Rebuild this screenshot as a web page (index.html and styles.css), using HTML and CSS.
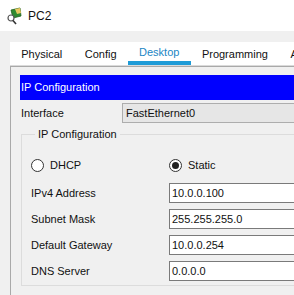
FILE: index.html
```html
<!DOCTYPE html>
<html lang="en">
<head>
  <meta charset="UTF-8" />
  <title>PC2</title>
  <link rel="stylesheet" href="styles.css">
</head>
<body>
  <div class="titlebar">
    <svg class="app-icon" width="16" height="18" viewBox="0 0 16 18">
      <polygon points="5,3 14,1 15,9 7,11" fill="#2f8a2f" stroke="#1d5e1d" stroke-width="0.8"/>
      <polygon points="9,2 14,1 15,6 11,7" fill="#e8c860"/>
      <circle cx="5" cy="11" r="3" fill="#fff" stroke="#555" stroke-width="1.2"/>
      <line x1="7" y1="13.5" x2="10" y2="17" stroke="#333" stroke-width="1.6"/>
    </svg>
    <span class="title">PC2</span>
  </div>

  <div class="tabs">
    <span class="tab">Physical</span>
    <span class="tab">Config</span>
    <span class="tab active">Desktop</span>
    <span class="tab">Programming</span>
    <span class="tab">Attributes</span>
  </div>

  <div class="panel">
    <div class="header">IP Configuration</div>

    <div class="row iface">
      <span class="label">Interface</span>
      <div class="combo">FastEthernet0</div>
    </div>

    <fieldset class="group">
      <legend>IP Configuration</legend>

      <div class="radios">
        <label class="radio"><span class="dot"></span>DHCP</label>
        <label class="radio checked"><span class="dot"></span>Static</label>
      </div>

      <div class="field">
        <span class="label">IPv4 Address</span>
        <div class="input">10.0.0.100</div>
      </div>
      <div class="field">
        <span class="label">Subnet Mask</span>
        <div class="input">255.255.255.0</div>
      </div>
      <div class="field">
        <span class="label">Default Gateway</span>
        <div class="input">10.0.0.254</div>
      </div>
      <div class="field">
        <span class="label">DNS Server</span>
        <div class="input">0.0.0.0</div>
      </div>
    </fieldset>
  </div>
</body>
</html>
```

FILE: styles.css
```css
html, body {
  overflow: hidden;
}
body {
  margin: 0;
  background: #f0f0f0;
  font-family: "Liberation Sans", Arial, sans-serif;
  font-size: 11px;
  color: #111;
  height: 295px;
}
.titlebar {
  height: 31px;
  background: #fff;
  display: flex;
  align-items: center;
  padding-left: 6px;
}
.app-icon {
  margin-right: 6px;
}
.title {
  font-size: 12px;
}
.tabs {
  margin: 11px 0 0 10px;
  height: 23px;
  background: #fff;
  display: flex;
  white-space: nowrap;
  overflow: hidden;
  border-bottom: 1px solid #dadada;
}
.tab {
  padding: 1px 11.25px 0;
  line-height: 22px;
  flex: none;
}
.tab.active {
  color: #1b86c4;
  border-bottom: 4px solid #1e9bd7;
  line-height: 19px;
  height: 18px;
}
.panel {
  margin-left: 10px;
  border-left: 1px solid #a9a9a9;
  border-top: 1px solid #a9a9a9;
  padding: 8px 0 0 9px;
  height: 230px;
}
.header {
  background: #0000ff;
  color: #fff;
  height: 25px;
  line-height: 25px;
  padding-left: 1px;
  white-space: nowrap;
}
.row {
  display: flex;
  align-items: center;
}
.iface {
  margin-top: 3px;
  height: 20px;
}
.iface .label {
  width: 101px;
  padding-left: 1px;
}
.combo {
  flex: 1;
  height: 18px;
  line-height: 18px;
  background: #e6e6e6;
  border: 1px solid #adadad;
  border-right: none;
  padding-left: 3px;
}
.group {
  margin: 5px 0 0 1px;
  padding: 18px 0 4px 9px;
  border: 1px solid #dcdcdc;
  border-right: none;
}
.group legend {
  padding: 0 3px;
  margin-left: 4px;
}
.radios {
  display: flex;
  height: 14px;
  align-items: center;
}
.radio {
  display: flex;
  align-items: center;
  width: 138px;
}
.dot {
  width: 11px;
  height: 11px;
  border: 1px solid #333;
  border-radius: 50%;
  background: #fff;
  margin-right: 6px;
  display: flex;
  align-items: center;
  justify-content: center;
}
.radio.checked .dot::after {
  content: "";
  width: 7px;
  height: 7px;
  border-radius: 50%;
  background: #222;
}
.field {
  display: flex;
  align-items: center;
  margin-top: 6px;
}
.radios + .field {
  margin-top: 11px;
}
.field .label {
  width: 138px;
}
.input {
  flex: 1;
  height: 18px;
  line-height: 18px;
  background: #fff;
  border: 1px solid #7a7a7a;
  border-right: none;
  padding-left: 2px;
}
```
